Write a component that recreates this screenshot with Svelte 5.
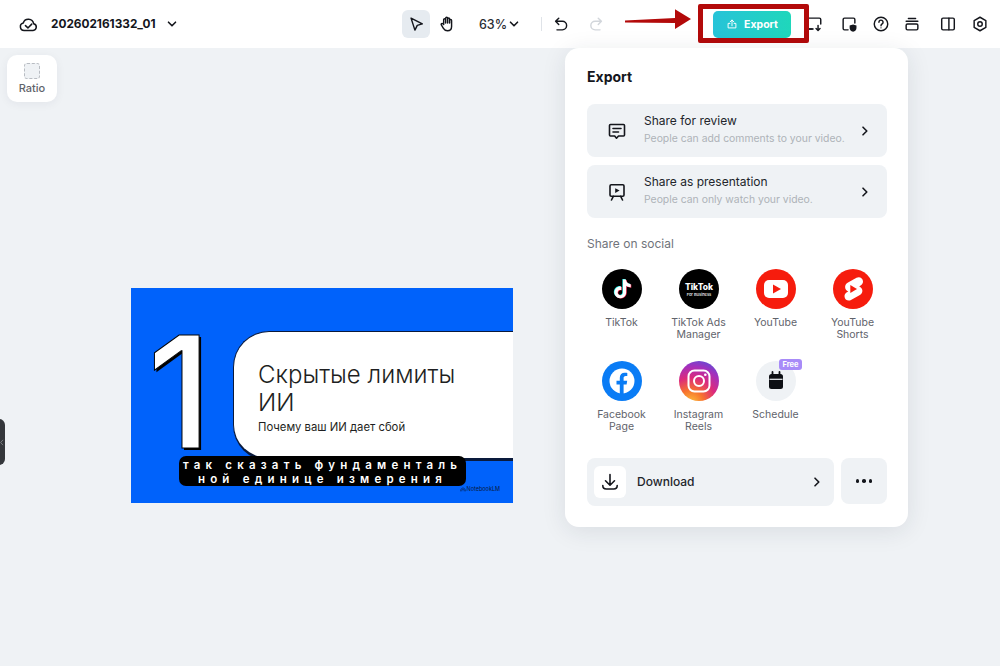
<script lang="ts">
	type Social = { id: string; label: string[] };

	const socials: Social[] = [
		{ id: 'tiktok', label: ['TikTok'] },
		{ id: 'ads', label: ['TikTok Ads', 'Manager'] },
		{ id: 'youtube', label: ['YouTube'] },
		{ id: 'shorts', label: ['YouTube', 'Shorts'] },
		{ id: 'facebook', label: ['Facebook', 'Page'] },
		{ id: 'instagram', label: ['Instagram', 'Reels'] },
		{ id: 'schedule', label: ['Schedule'] }
	];

	const tiktokPath =
		'M12.525.02c1.31-.02 2.61-.01 3.91-.02.08 1.53.63 3.09 1.75 4.17 1.12 1.11 2.7 1.62 4.24 1.79v4.03c-1.44-.05-2.89-.35-4.2-.97-.57-.26-1.1-.59-1.62-.93-.01 2.92.01 5.84-.02 8.75-.08 1.4-.54 2.79-1.35 3.94-1.31 1.92-3.58 3.17-5.91 3.21-1.43.08-2.86-.31-4.08-1.03-2.02-1.19-3.44-3.37-3.65-5.71-.02-.5-.03-1-.01-1.49.18-1.9 1.12-3.72 2.58-4.96 1.66-1.44 3.98-2.13 6.15-1.72.02 1.48-.04 2.96-.04 4.44-.99-.32-2.15-.23-3.02.37-.63.41-1.11 1.04-1.36 1.75-.21.51-.15 1.07-.14 1.61.24 1.64 1.82 3.02 3.5 2.87 1.12-.01 2.19-.66 2.77-1.61.19-.33.4-.67.41-1.06.1-1.79.06-3.57.07-5.36.01-4.03-.01-8.05.02-12.07z';
</script>

<div class="page">
	<header class="topbar">
		<div class="project">
			<svg class="ic cloud" viewBox="0 0 20 20">
				<path d="M5.4 16.2h9.4a3.6 3.6 0 0 0 .6-7.1 5.6 5.6 0 0 0-10.9-.6 3.9 3.9 0 0 0 .9 7.7z" />
				<path d="M6.8 11.2l2.6 2.4 4-4" />
			</svg>
			<span class="name">202602161332_01</span>
			<svg class="ic chev" viewBox="0 0 12 12"><path d="M2.5 4.2 6 7.8l3.5-3.6" /></svg>
		</div>

		<div class="tools">
			<button class="tool active" aria-label="Select">
				<svg class="ic" viewBox="0 0 20 20"><path d="M4.5 3.5 17 9.8l-5.6 1.7-2.6 5.3z" /></svg>
			</button>
			<button class="tool" aria-label="Hand">
				<svg class="ic" viewBox="0 0 20 20">
					<path d="M6.3 10.5V5.2a1.1 1.1 0 0 1 2.2 0v3.6V3.6a1.1 1.1 0 0 1 2.2 0v5.2V4.4a1.1 1.1 0 0 1 2.2 0v4.6V6.2a1.1 1.1 0 0 1 2.2 0v6.6c0 2.8-1.9 4.7-4.6 4.7-2.2 0-3.4-.9-4.5-2.7l-2.3-3.7c-.8-1.3.9-2.4 1.8-1.3z" />
				</svg>
			</button>
			<div class="zoom">
				<span>63%</span>
				<svg class="ic chev" viewBox="0 0 12 12"><path d="M2.5 4.2 6 7.8l3.5-3.6" /></svg>
			</div>
			<span class="divider"></span>
			<button class="tool" aria-label="Undo">
				<svg class="ic" viewBox="0 0 20 20"><path d="M7.5 3.5 4 7l3.5 3.5M4.5 7h7a4 4 0 0 1 0 9.5h-6" /></svg>
			</button>
			<button class="tool redo" aria-label="Redo">
				<svg class="ic" viewBox="0 0 20 20"><path d="M12.5 3.5 16 7l-3.5 3.5M15.5 7H9a4 4 0 0 0 0 9.5h5.5" /></svg>
			</button>
		</div>

		<div class="actions">
			<button class="export">
				<svg class="ic" viewBox="0 0 20 20">
					<path d="M10 13V3.5M6.8 6.5 10 3.3l3.2 3.2M6.5 9h-3v7.500h13V9h-3" />
				</svg>
				Export
			</button>
			<div class="icons">
				<button class="tool" aria-label="Captions">
					<svg class="ic" viewBox="0 0 20 20">
						<path d="M9 15.5H4A1.5 1.5 0 0 1 2.5 14V5A1.5 1.5 0 0 1 4 3.5h12A1.5 1.5 0 0 1 17.5 5v5" />
						<path d="M14.5 11.5V17M12.3 15l2.2 2.2 2.2-2.2M4 15.5h4" />
					</svg>
				</button>
				<button class="tool" aria-label="Protect">
					<svg class="ic" viewBox="0 0 20 20">
						<path d="M9 16.5H5A1.5 1.5 0 0 1 3.5 15V5A1.5 1.5 0 0 1 5 3.5h10A1.5 1.5 0 0 1 16.5 5v4" />
						<path class="solid" d="M14.5 10.500l3.800 1.300v2.600c0 2.100-1.500 3.500-3.800 4.300-2.300-.8-3.800-2.200-3.800-4.300v-2.600z" />
					</svg>
				</button>
				<button class="tool" aria-label="Help">
					<svg class="ic" viewBox="0 0 20 20">
						<circle cx="10" cy="10" r="7.5" />
						<path d="M7.7 8a2.3 2.3 0 1 1 3.6 1.900c-.9.6-1.300 1-1.300 2" />
						<circle class="solid" cx="10" cy="14.3" r=".7" />
					</svg>
				</button>
				<button class="tool" aria-label="Layers">
					<svg class="ic" viewBox="0 0 20 20">
						<rect x="3.5" y="10" width="13" height="6.5" rx="1.5" />
						<path d="M3.5 7h13M6 3.8h8" />
					</svg>
				</button>
				<button class="tool" aria-label="Panels">
					<svg class="ic" viewBox="0 0 20 20">
						<rect x="3" y="3.5" width="14" height="13" rx="1.5" />
						<path d="M11 3.5v13" />
					</svg>
				</button>
				<button class="tool" aria-label="Settings">
					<svg class="ic" viewBox="0 0 20 20">
						<path d="M10 2.5l6.5 3.7v7.6L10 17.5l-6.5-3.700V6.200z" />
						<circle cx="10" cy="10" r="2.5" />
					</svg>
				</button>
			</div>
		</div>
	</header>

	<main class="canvas">
		<div class="slide">
			<div class="big">1</div>
			<div class="card">
				<div class="card-title">Скрытые лимиты<br />ИИ</div>
				<div class="card-sub">Почему ваш ИИ дает сбой</div>
			</div>
			<div class="caption">так сказать фундаменталь<br />ной единице измерения</div>
			<div class="nlm">
				<svg viewBox="0 0 10 8"><path d="M1 7c0-3.500 1.800-5.500 4-5.500S9 3.500 9 7M3 7c0-2 .9-3.300 2-3.300S7 5 7 7" /></svg>
				NotebookLM
			</div>
		</div>

		<button class="ratio">
			<span class="ratio-box"></span>
			Ratio
		</button>
		<span class="handle">
			<svg viewBox="0 0 6 10"><path d="M4.5 1 1 5l3.5 4" /></svg>
		</span>
	</main>

	<!-- annotation over the screenshot -->
	<span class="mark"></span>
	<svg class="arrow" viewBox="0 0 70 24">
		<path d="M1 14.500 51 12V3.300L67 13 51 23v-6L1 16.500z" />
	</svg>

	<section class="panel">
		<h2>Export</h2>

		<button class="row">
			<svg class="ic row-ic" viewBox="0 0 20 20">
				<path d="M3.5 3.5h13a1 1 0 0 1 1 1V14a1 1 0 0 1-1 1h-5l-2 2.200L7.700 15H3.500a1 1 0 0 1-1-1V4.500a1 1 0 0 1 1-1z" />
				<path d="M6 7.5h8M6 11h5.5" />
			</svg>
			<span class="row-text">
				<span class="row-title">Share for review</span>
				<span class="row-sub">People can add comments to your video.</span>
			</span>
			<svg class="ic row-chev" viewBox="0 0 12 12"><path d="M4 2.2 7.8 6 4 9.8" /></svg>
		</button>

		<button class="row">
			<svg class="ic row-ic" viewBox="0 0 20 20">
				<rect x="3" y="2.8" width="14" height="11.5" rx="1.2" />
				<path class="solid" d="M8.2 6.2 12.6 8.600 8.200 11z" />
				<path d="M6.3 14.300 4.500 18M13.700 14.300l1.800 3.700" />
			</svg>
			<span class="row-text">
				<span class="row-title">Share as presentation</span>
				<span class="row-sub">People can only watch your video.</span>
			</span>
			<svg class="ic row-chev" viewBox="0 0 12 12"><path d="M4 2.2 7.8 6 4 9.8" /></svg>
		</button>

		<div class="social-label">Share on social</div>

		<div class="socials">
			{#each socials as s}
				<div class="social">
					<div class="logo">
						{#if s.id === 'tiktok'}
							<svg viewBox="0 0 40 40">
								<circle cx="20" cy="20" r="20" fill="#000" />
								<g transform="translate(10.6 10.1) scale(.78)">
									<path d={tiktokPath} fill="#25f4ee" />
								</g>
								<g transform="translate(11.8 10.9) scale(.78)">
									<path d={tiktokPath} fill="#fe2c55" />
								</g>
								<g transform="translate(11.2 10.5) scale(.78)">
									<path d={tiktokPath} fill="#fff" />
								</g>
							</svg>
						{:else if s.id === 'ads'}
							<svg viewBox="0 0 40 40">
								<circle cx="20" cy="20" r="20" fill="#000" />
								<text x="20" y="20.5" class="ads-a">TikTok</text>
								<text x="20" y="26.5" class="ads-b">For Business</text>
							</svg>
						{:else if s.id === 'youtube'}
							<svg viewBox="0 0 40 40">
								<circle cx="20" cy="20" r="20" fill="#f61c0d" />
								<rect x="8" y="11" width="24" height="18" rx="5" fill="#fff" />
								<path d="M17 15.5 25 20l-8 4.5z" fill="#f61c0d" />
							</svg>
						{:else if s.id === 'shorts'}
							<svg viewBox="0 0 40 40">
								<circle cx="20" cy="20" r="20" fill="#f61c0d" />
								<path d="M23.5 8.800c3-1.600 6.500.4 6.500 3.800 0 1.700-.9 3.200-2.400 4l-1.400.8c1.900.7 3.200 2.400 3.200 4.400 0 1.800-1 3.300-2.500 4.200l-8.900 5c-3 1.600-6.500-.4-6.500-3.800 0-1.700.9-3.200 2.400-4l1.400-.8c-1.900-.7-3.200-2.400-3.200-4.400 0-1.800 1-3.300 2.500-4.200z" fill="#fff" />
								<path d="M17.3 16 24 20l-6.700 4z" fill="#f61c0d" />
							</svg>
						{:else if s.id === 'facebook'}
							<svg viewBox="0 0 40 40">
								<circle cx="20" cy="20" r="20" fill="#0a7cf5" />
								<circle cx="20" cy="20" r="12.5" fill="#fff" />
								<path d="M17.8 33v-9.500h-3.300v-3.800h3.300v-2.900c0-3.300 2-5.100 4.900-5.100 1.400 0 2.600.2 2.600.2v3.200h-1.600c-1.600 0-2.100 1-2.100 2v2.600h3.600l-.6 3.800h-3V33z" fill="#0a7cf5" />
							</svg>
						{:else if s.id === 'instagram'}
							<svg viewBox="0 0 40 40">
								<defs>
									<radialGradient id="ig" cx="0.3" cy="1.05" r="1.15">
										<stop offset="0" stop-color="#fdc13c" />
										<stop offset="0.28" stop-color="#f7722e" />
										<stop offset="0.55" stop-color="#dc2a7c" />
										<stop offset="0.8" stop-color="#a330bd" />
										<stop offset="1" stop-color="#5a4fd6" />
									</radialGradient>
								</defs>
								<circle cx="20" cy="20" r="20" fill="url(#ig)" />
								<rect x="9.5" y="9.5" width="21" height="21" rx="6" fill="none" stroke="#fff" stroke-width="2" />
								<circle cx="20" cy="20" r="5" fill="none" stroke="#fff" stroke-width="2" />
								<circle cx="26.3" cy="13.7" r="1.3" fill="#fff" />
							</svg>
						{:else}
							<svg viewBox="0 0 40 40">
								<circle cx="20" cy="20" r="20" fill="#eff2f5" />
								<rect x="13" y="13" width="14" height="15" rx="2.5" fill="#0d0f14" />
								<path d="M16.5 11v4M23.5 11v4" stroke="#0d0f14" stroke-width="1.8" stroke-linecap="round" />
								<path d="M13.5 18.3h13" stroke="#eff2f5" stroke-width="1.2" />
							</svg>
							<span class="free">Free</span>
						{/if}
					</div>
					<div class="social-name">
						{#each s.label as line}
							<div>{line}</div>
						{/each}
					</div>
				</div>
			{/each}
		</div>

		<div class="bottom">
			<button class="download">
				<span class="dl-box">
					<svg class="ic" viewBox="0 0 20 20">
						<path d="M10 2.5V13M5.500 8.800 10 13.200l4.500-4.400M2.800 13.500c0 2.200 1.300 3.500 3.500 3.500h7.400c2.200 0 3.500-1.300 3.500-3.500" />
					</svg>
				</span>
				<span class="dl-text">Download</span>
				<svg class="ic row-chev" viewBox="0 0 12 12"><path d="M4 2.2 7.8 6 4 9.8" /></svg>
			</button>
			<button class="more" aria-label="More">
				<i></i><i></i><i></i>
			</button>
		</div>
	</section>
</div>

<style>
	:global(body) {
		margin: 0;
		font-family: Inter, 'Noto Sans', sans-serif;
		color: #14161c;
	}

	button {
		border: 0;
		background: none;
		padding: 0;
		font: inherit;
		color: inherit;
	}

	.page {
		position: relative;
		width: 1000px;
		height: 666px;
		overflow: hidden;
		background: #eff2f5;
		display: flex;
		flex-direction: column;
	}

	.ic {
		display: block;
		fill: none;
		stroke: #14161c;
		stroke-width: 1.6;
		stroke-linecap: round;
		stroke-linejoin: round;
	}

	.solid {
		fill: #14161c;
		stroke: none;
	}

	.topbar {
		height: 48px;
		flex: none;
		background: #fff;
		display: flex;
		align-items: center;
	}

	.project {
		display: flex;
		align-items: center;
		padding-left: 19px;
		width: 402px;
		box-sizing: border-box;
	}

	.cloud {
		width: 19px;
		height: 19px;
		margin-right: 13px;
	}

	.name {
		font-size: 11.8px;
		font-weight: 700;
		width: 115px;
		white-space: nowrap;
	}

	.chev {
		width: 12px;
		height: 12px;
	}

	.tools {
		display: flex;
		align-items: center;
		width: 311px;
	}

	.tool {
		width: 28px;
		height: 28px;
		border-radius: 6px;
		display: flex;
		align-items: center;
		justify-content: center;
		flex: none;
	}

	.tool .ic {
		width: 18px;
		height: 18px;
	}

	.tool.active {
		background: #e6ebf0;
		margin-right: 3px;
	}

	.redo {
		margin-left: 7px;
	}

	.redo .ic {
		stroke: #d2d6db;
	}

	.zoom {
		display: flex;
		align-items: center;
		gap: 1px;
		font-size: 12.5px;
		font-weight: 500;
		margin-left: 18px;
		color: #2a2d33;
	}

	.divider {
		width: 1px;
		height: 14px;
		background: #dfe3e8;
		margin: 0 5px 0 21px;
	}

	.actions {
		display: flex;
		align-items: center;
	}

	.export {
		width: 78px;
		height: 27px;
		border-radius: 5px;
		background: linear-gradient(90deg, #27c3d8, #1fd7bb);
		color: #fff;
		font-size: 10.5px;
		font-weight: 700;
		display: flex;
		align-items: center;
		justify-content: center;
		gap: 6px;
	}

	.export .ic {
		width: 12px;
		height: 12px;
		stroke: #fff;
	}

	.icons {
		display: flex;
		margin-left: 9px;
	}

	.icons .tool:nth-child(2) {
		margin-left: 7px;
	}
	.icons .tool:nth-child(3) {
		margin-left: 4px;
	}
	.icons .tool:nth-child(4) {
		margin-left: 3px;
	}
	.icons .tool:nth-child(5) {
		margin-left: 8px;
	}
	.icons .tool:nth-child(6) {
		margin-left: 4px;
	}

	.canvas {
		position: relative;
		flex: 1;
		padding: 240px 0 0 131px;
	}

	.slide {
		position: relative;
		width: 382px;
		height: 215px;
		box-sizing: border-box;
		background: #0062fb;
		padding-top: 43px;
		display: flex;
		align-items: flex-start;
		overflow: hidden;
	}

	.big {
		width: 97px;
		padding-right: 5px;
		flex: none;
		text-align: center;
		font-size: 155px;
		font-weight: 500;
		line-height: 121px;
		color: #fff;
		-webkit-text-stroke: 1px #000;
		text-shadow: 2px 2px 0 #000;
	}

	.card {
		flex: 1;
		height: 130px;
		box-sizing: border-box;
		background: #fff;
		border: solid #0a1a3c;
		border-width: 1px 0 3px 1px;
		border-radius: 36px 0 0 36px;
		padding: 29px 0 0 24px;
		color: #1e1f22;
	}

	.card-title {
		font-size: 24px;
		line-height: 28px;
		font-weight: 300;
	}

	.card-sub {
		font-size: 11.3px;
		line-height: 14px;
		margin-top: 3px;
	}

	.caption {
		position: absolute;
		left: 48px;
		top: 168px;
		width: 287px;
		height: 30px;
		background: #000;
		border-radius: 7px;
		color: #fff;
		font-size: 11.5px;
		line-height: 14px;
		font-weight: 600;
		letter-spacing: 5.2px;
		text-align: center;
		white-space: nowrap;
		padding-top: 2px;
		box-sizing: border-box;
	}

	.nlm {
		position: absolute;
		right: 13px;
		top: 197px;
		display: flex;
		align-items: center;
		gap: 1px;
		font-size: 5.5px;
		line-height: 8px;
		color: #0a1a3c;
	}

	.nlm svg {
		width: 6px;
		height: 5px;
		fill: none;
		stroke: #0a1a3c;
		stroke-width: 1;
	}

	.ratio {
		position: absolute;
		left: 7px;
		top: 7px;
		width: 50px;
		height: 47px;
		border-radius: 10px;
		background: #fff;
		box-shadow: 0 2px 10px rgba(30, 40, 60, 0.06);
		font-size: 11px;
		line-height: 13px;
		font-weight: 500;
		color: #5f636b;
		display: flex;
		flex-direction: column;
		align-items: center;
		gap: 3px;
		padding-top: 8px;
		box-sizing: border-box;
	}

	.ratio-box {
		width: 16px;
		height: 16px;
		box-sizing: border-box;
		border: 1px dashed #b8bcc2;
		border-radius: 3px;
		background: #eff2f5;
	}

	.handle {
		position: absolute;
		left: -8px;
		top: 371px;
		width: 13px;
		height: 46px;
		border-radius: 6px;
		background: #34373b;
		display: flex;
		align-items: center;
		justify-content: flex-end;
		padding-right: 1px;
		box-sizing: border-box;
	}

	.handle svg {
		width: 4px;
		height: 7px;
		fill: none;
		stroke: #8b8e92;
		stroke-width: 1.2;
	}

	.mark {
		position: absolute;
		left: 698px;
		top: 4px;
		width: 111px;
		height: 39px;
		box-sizing: border-box;
		border: 5px solid #b30a0a;
		border-radius: 2px;
		pointer-events: none;
	}

	.arrow {
		position: absolute;
		left: 624px;
		top: 6px;
		width: 70px;
		height: 24px;
		fill: #b30a0a;
	}

	.panel {
		position: absolute;
		left: 565px;
		top: 48px;
		width: 343px;
		height: 479px;
		box-sizing: border-box;
		background: #fff;
		border-radius: 14px;
		box-shadow: 0 4px 24px rgba(30, 40, 60, 0.1);
		padding: 21px 21px 0 22px;
	}

	h2 {
		margin: 0 0 19px;
		font-size: 14px;
		line-height: 16px;
		font-weight: 700;
	}

	.row {
		width: 300px;
		height: 53px;
		background: #eff2f5;
		border-radius: 8px;
		display: flex;
		align-items: center;
		text-align: left;
		margin-bottom: 8px;
	}

	.row-ic {
		width: 20px;
		height: 20px;
		margin: 0 17px 0 20px;
		flex: none;
	}

	.row-text {
		flex: 1;
		display: flex;
		flex-direction: column;
		gap: 2px;
		padding-bottom: 3px;
	}

	.row-title {
		font-size: 12px;
		line-height: 16px;
		color: #22252b;
	}

	.row-sub {
		font-size: 10.4px;
		line-height: 14px;
		color: #aeb2b8;
		padding-top: 1px;
	}

	.row-chev {
		width: 12px;
		height: 12px;
		margin-right: 16px;
		flex: none;
	}

	.social-label {
		font-size: 12px;
		line-height: 14px;
		color: #70747b;
		margin: 19px 0 18px;
	}

	.socials {
		display: grid;
		grid-template-columns: repeat(4, 77px);
		grid-auto-rows: 92px;
		margin-left: -4px;
	}

	.social {
		display: flex;
		flex-direction: column;
		align-items: center;
	}

	.logo {
		position: relative;
		width: 40px;
		height: 40px;
	}

	.logo svg {
		display: block;
		width: 40px;
		height: 40px;
	}

	.ads-a {
		font-size: 8.5px;
		font-weight: 800;
		fill: #fff;
		text-anchor: middle;
	}

	.ads-b {
		font-size: 4px;
		font-weight: 500;
		fill: #fff;
		text-anchor: middle;
	}

	.free {
		position: absolute;
		right: -6px;
		top: -2px;
		height: 11px;
		padding: 0 3px;
		border-radius: 3px;
		background: #a88bf8;
		color: #fff;
		font-size: 7.5px;
		font-weight: 700;
		line-height: 11px;
	}

	.social-name {
		margin-top: 8px;
		font-size: 10.5px;
		line-height: 12px;
		color: #5f636b;
		text-align: center;
		white-space: nowrap;
	}

	.bottom {
		display: flex;
		align-items: flex-start;
		gap: 7px;
		margin-top: 5px;
	}

	.download {
		width: 247px;
		height: 48px;
		background: #eff2f5;
		border-radius: 8px;
		display: flex;
		align-items: center;
		text-align: left;
	}

	.dl-box {
		width: 32px;
		height: 32px;
		margin-left: 7px;
		border-radius: 6px;
		background: #fff;
		display: flex;
		align-items: center;
		justify-content: center;
	}

	.dl-box .ic {
		width: 20px;
		height: 20px;
	}

	.dl-text {
		flex: 1;
		margin-left: 11px;
		padding-bottom: 2px;
		font-size: 12px;
		font-weight: 500;
		color: #22252b;
	}

	.download .row-chev {
		margin-right: 11px;
	}

	.more {
		width: 46px;
		height: 46px;
		background: #eff2f5;
		border-radius: 8px;
		display: flex;
		align-items: center;
		justify-content: center;
		gap: 3px;
	}

	.more i {
		width: 3.5px;
		height: 3.5px;
		border-radius: 50%;
		background: #14161c;
	}
</style>
